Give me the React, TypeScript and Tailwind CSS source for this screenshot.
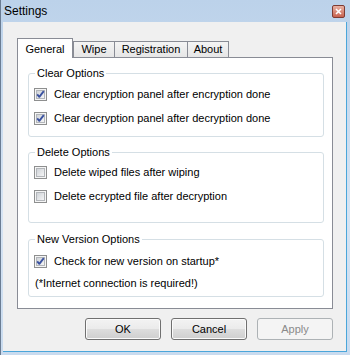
import React from 'react';

function CheckBox({ checked }: { checked: boolean }) {
  return (
    <svg width="13" height="13" viewBox="0 0 13 13" className="shrink-0">
      <defs>
        <linearGradient id="cbfill" x1="0" y1="0" x2="1" y2="1">
          <stop offset="0" stopColor="#cdd1d6" />
          <stop offset="1" stopColor="#f7f7f7" />
        </linearGradient>
      </defs>
      <rect x="0.5" y="0.5" width="12" height="12" fill="#f5f5f5" stroke="#8e8f8f" />
      <rect x="2.5" y="2.5" width="8" height="8" fill="url(#cbfill)" stroke="#b3b6ba" />
      {checked && (
        <path d="M3.2 6.4 L5.3 8.8 L9.8 3.2" fill="none" stroke="#3b52a0" strokeWidth="1.9" strokeLinejoin="round" />
      )}
    </svg>
  );
}

function CheckRow({ label, checked, h = 'h-[24px]' }: { label: string; checked: boolean; h?: string }) {
  return (
    <div className={`flex items-center gap-[7px] pl-[5px] ${h}`}>
      <CheckBox checked={checked} />
      <span>{label}</span>
    </div>
  );
}

function Group({ title, children, className }: { title: string; children: React.ReactNode; className?: string }) {
  return (
    <fieldset className={`min-w-0 w-[296px] rounded-[3px] border border-[#d5dfe5] px-0 ${className ?? ''}`}>
      <legend className="ml-[6px] px-[2px] leading-[13px]">{title}</legend>
      {children}
    </fieldset>
  );
}

function Btn({ label, disabled }: { label: string; disabled?: boolean }) {
  return (
    <button
      className={
        disabled
          ? 'h-[22px] w-[76px] rounded-[3px] border border-[#adb2b5] bg-[#f4f4f4] text-[#8a8a8a]'
          : 'h-[22px] w-[76px] rounded-[3px] border border-[#707070] bg-[linear-gradient(#f3f3f3,#ebebeb_48%,#dddddd_52%,#cfcfcf)] text-black shadow-[inset_0_0_0_1px_#fbfbfb]'
      }
    >
      {label}
    </button>
  );
}

export default function App() {
  const tabs = ['Wipe', 'Registration', 'About'];
  const widths: Record<string, string> = { Wipe: 'w-[42px]', Registration: 'w-[74px] -ml-px', About: 'w-[42px] -ml-px' };

  return (
    <div className="flex h-[355px] w-[350px] flex-col border-l border-[#6b7d93] bg-[linear-gradient(#bcd2ea,#d6e4f3_60%,#c9dbef)] font-['Liberation_Sans',Arial,sans-serif] text-[11px] text-black">
      <div className="flex h-[22px] shrink-0 items-center justify-between pl-[3px] pr-[5px]">
        <span className="text-[12px] text-black">Settings</span>
        <div className="flex h-[13px] w-[13px] items-center justify-center rounded-[2px] border border-[#7e3b32] bg-[linear-gradient(#e9b2a4,#c8624f)]">
          <svg width="7" height="7" viewBox="0 0 7 7">
            <path d="M1 1 L6 6 M6 1 L1 6" stroke="#ffffff" strokeWidth="1.6" />
          </svg>
        </div>
      </div>

      <div className="mb-[3px] ml-[2px] mr-[3px] flex flex-1 flex-col border-r border-b border-[#4aa6da] bg-[#f0f0f0] pl-[14px] pt-[16px]">
        <div className="relative z-10 -mb-px flex items-end">
          <div className="flex h-[20px] w-[56px] items-start justify-center border border-b-0 border-[#898c95] bg-white pt-[2px]">
            General
          </div>
          {tabs.map((t) => (
            <div
              key={t}
              className={`mb-px flex h-[16px] items-center justify-center border border-b-0 border-[#898c95] bg-[linear-gradient(#f4f4f4,#e6e6e6)] ${widths[t]}`}
            >
              {t}
            </div>
          ))}
        </div>

        <div className="flex h-[252px] w-[316px] flex-col border border-[#898c95] bg-white px-[10px] pt-[9px]">
          <Group title="Clear Options" className="pb-[6px]">
            <div className="pt-[2px]">
              <CheckRow label="Clear encryption panel after encryption done" checked />
              <CheckRow label="Clear decryption panel after decryption done" checked />
            </div>
          </Group>

          <Group title="Delete Options" className="mt-[9px] pb-[14px]">
            <div className="pt-[1px]">
              <CheckRow label="Delete wiped files after wiping" checked={false} />
              <CheckRow label="Delete ecrypted file after decryption" checked={false} />
            </div>
          </Group>

          <Group title="New Version Options" className="mt-[10px] pb-[3px]">
            <div className="pt-[3px]">
              <CheckRow label="Check for new version on startup*" checked />
              <div className="flex h-[20px] items-center pl-[6px]">(*Internet connection is required!)</div>
            </div>
          </Group>
        </div>

        <div className="mt-[9px] flex w-[316px] justify-end gap-[10px]">
          <Btn label="OK" />
          <Btn label="Cancel" />
          <Btn label="Apply" disabled />
        </div>
      </div>
    </div>
  );
}
